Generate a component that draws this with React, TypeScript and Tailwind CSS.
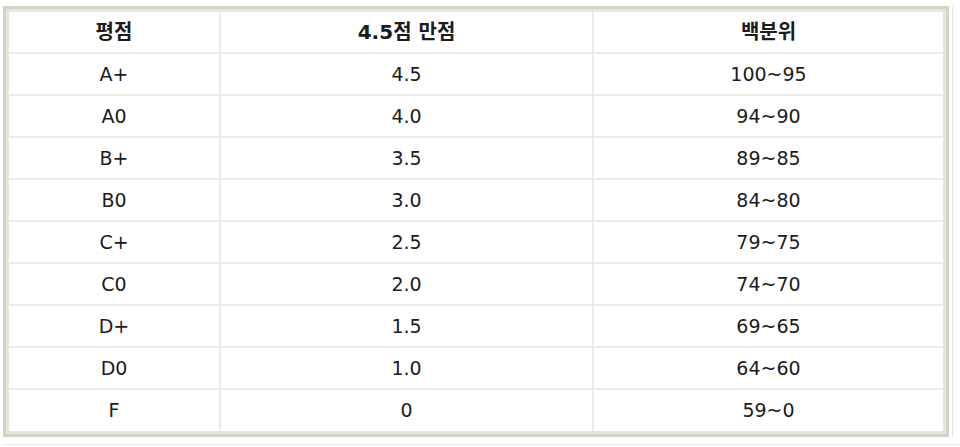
const rows = [
  ["A+", "4.5", "100~95"],
  ["A0", "4.0", "94~90"],
  ["B+", "3.5", "89~85"],
  ["B0", "3.0", "84~80"],
  ["C+", "2.5", "79~75"],
  ["C0", "2.0", "74~70"],
  ["D+", "1.5", "69~65"],
  ["D0", "1.0", "64~60"],
  ["F", "0", "59~0"],
];

export default function App() {
  return (
    <div className="h-[447px] w-[960px] bg-white pt-[6px] pl-[3px] font-['DejaVu_Sans','Noto_Sans_CJK_KR',sans-serif] text-[19px] text-[#1c1c1c]">
      <div className="flex">
        <div className="w-[946px] border-[3px] border-[#d3d3c8] bg-[#e6e6dc] p-[3px]">
          <table className="w-full table-fixed border-collapse bg-white">
            <colgroup>
              <col className="w-[211px]" />
              <col className="w-[373px]" />
              <col />
            </colgroup>
            <thead>
              <tr className="h-[41px] border-b-2 border-[#ecece6] text-[20px]">
                <th className="border-r-2 border-[#ecece6] font-bold">평점</th>
                <th className="border-r-2 border-[#ecece6] font-bold">4.5점 만점</th>
                <th className="font-bold">백분위</th>
              </tr>
            </thead>
            <tbody>
              {rows.map((r, i) => (
                <tr key={r[0]} className={i < rows.length - 1 ? "h-[42px] border-b-2 border-[#ecece6]" : "h-[42px]"}>
                  <td className="border-r-2 border-[#ecece6] text-center">{r[0]}</td>
                  <td className="border-r-2 border-[#ecece6] text-center">{r[1]}</td>
                  <td className="text-center">{r[2]}</td>
                </tr>
              ))}
            </tbody>
          </table>
        </div>
        <div className="ml-[3px] w-[8px] border-l border-dotted border-[#cfcfcf]"></div>
      </div>
      <div className="mt-[7px] w-[957px] border-t border-dotted border-[#cfcfcf]"></div>
    </div>
  );
}
